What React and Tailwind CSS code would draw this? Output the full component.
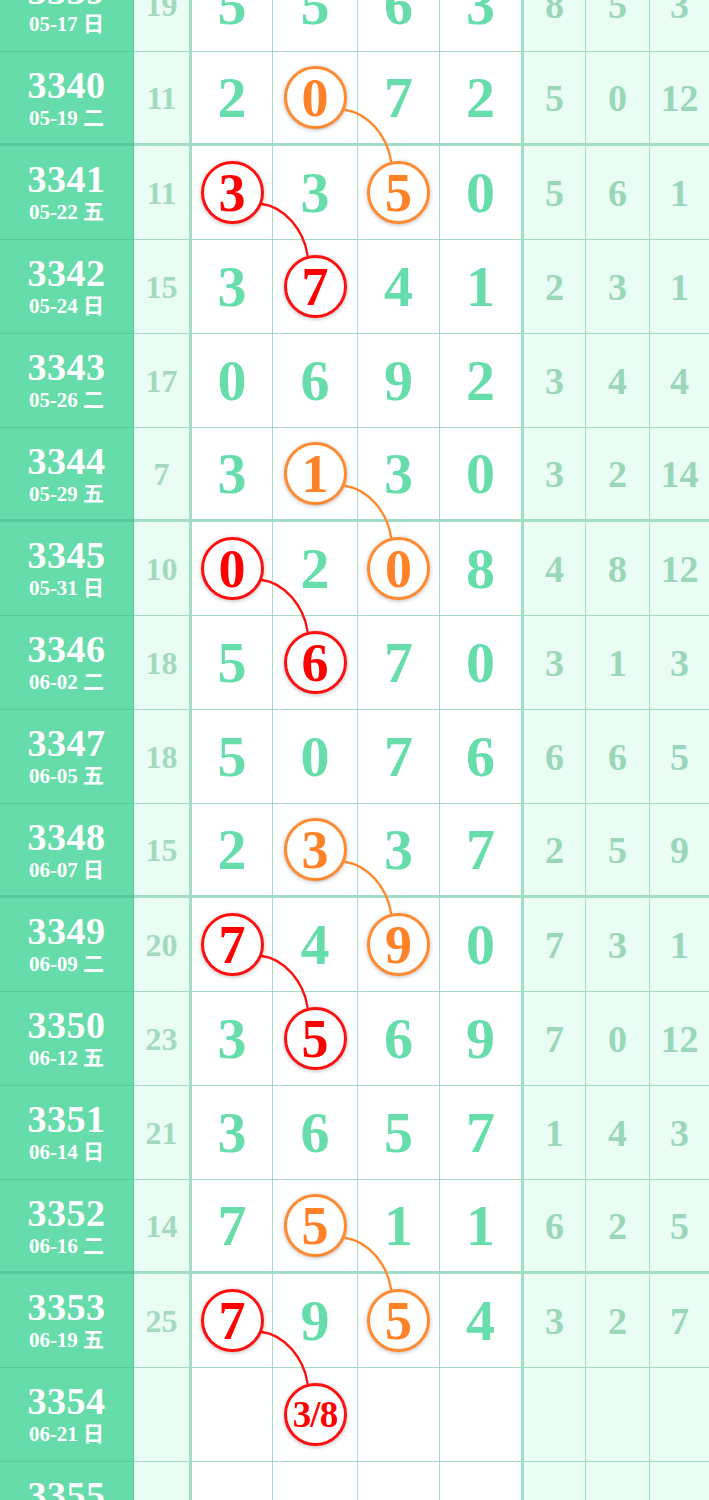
import React from "react";

const rows = [
  { n: "3339", d: "05-17 日", s: "19", g: ["5", "5", "6", "3"], r: ["8", "5", "3"] },
  { n: "3340", d: "05-19 二", s: "11", g: ["2", "0", "7", "2"], r: ["5", "0", "12"], o: 1 },
  { n: "3341", d: "05-22 五", s: "11", g: ["3", "3", "5", "0"], r: ["5", "6", "1"], red: 0, o: 2 },
  { n: "3342", d: "05-24 日", s: "15", g: ["3", "7", "4", "1"], r: ["2", "3", "1"], red: 1 },
  { n: "3343", d: "05-26 二", s: "17", g: ["0", "6", "9", "2"], r: ["3", "4", "4"] },
  { n: "3344", d: "05-29 五", s: "7", g: ["3", "1", "3", "0"], r: ["3", "2", "14"], o: 1 },
  { n: "3345", d: "05-31 日", s: "10", g: ["0", "2", "0", "8"], r: ["4", "8", "12"], red: 0, o: 2 },
  { n: "3346", d: "06-02 二", s: "18", g: ["5", "6", "7", "0"], r: ["3", "1", "3"], red: 1 },
  { n: "3347", d: "06-05 五", s: "18", g: ["5", "0", "7", "6"], r: ["6", "6", "5"] },
  { n: "3348", d: "06-07 日", s: "15", g: ["2", "3", "3", "7"], r: ["2", "5", "9"], o: 1 },
  { n: "3349", d: "06-09 二", s: "20", g: ["7", "4", "9", "0"], r: ["7", "3", "1"], red: 0, o: 2 },
  { n: "3350", d: "06-12 五", s: "23", g: ["3", "5", "6", "9"], r: ["7", "0", "12"], red: 1 },
  { n: "3351", d: "06-14 日", s: "21", g: ["3", "6", "5", "7"], r: ["1", "4", "3"] },
  { n: "3352", d: "06-16 二", s: "14", g: ["7", "5", "1", "1"], r: ["6", "2", "5"], o: 1 },
  { n: "3353", d: "06-19 五", s: "25", g: ["7", "9", "5", "4"], r: ["3", "2", "7"], red: 0, o: 2 },
  { n: "3354", d: "06-21 日", s: "", g: ["", "3/8", "", ""], r: ["", "", ""], red: 1 },
  { n: "3355", d: "06-23 二", s: "", g: ["", "", "", ""], r: ["", "", ""] },
];

const colX = [232, 315.5, 399, 482];
const ROW = 94;

function curve(ax, ay, bx, by) {
  return `M${ax + 30},${ay + 11} C${ax + 52},${ay + 14} ${bx - 12},${by - 58} ${bx - 8},${by - 32}`;
}

const digitW = ["w-[81px]", "w-[85px]", "w-[82px]", "w-[84px]"];
const rightW = ["w-[62px]", "w-[64px]", "flex-1"];

function Circle({ v, color }) {
  const red = color === "red";
  return (
    <div
      className={
        "relative z-10 w-[63px] h-[63px] rounded-full bg-white flex items-center justify-center border-[3px] border-solid shadow-[0_1px_4px_rgba(0,0,0,0.28)] " +
        (red ? "border-[#ff1010] text-[#ff0000]" : "border-[#ff8a30] text-[#ff8228]")
      }
    >
      <span className={(v.length > 1 ? "text-[37px] tracking-[-1px]" : "text-[54px]") + " leading-none font-bold"}>{v}</span>
    </div>
  );
}

export default function App() {
  const lines = [];
  rows.forEach((row, i) => {
    const y = ROW * i + ROW / 2;
    const ny = y + ROW;
    const next = rows[i + 1];
    if (row.o === 1 && next && next.o === 2) {
      lines.push({ d: curve(colX[1], y, colX[2], ny), c: "#ff8a30" });
    }
    if (row.red === 0 && next && next.red === 1) {
      lines.push({ d: curve(colX[0], y, colX[1], ny), c: "#ff1010" });
    }
  });

  const thin = "#a3ddc2";
  return (
    <div className="w-[709px] h-[1500px] overflow-hidden bg-white font-['Liberation_Serif','Noto_Sans_CJK_SC',serif]">
      <div className="relative -mt-[42px]">
        <svg className="absolute left-0 top-0 z-0 pointer-events-none" width="709" height={ROW * rows.length}>
          {lines.map((l, k) => (
            <path key={k} d={l.d} fill="none" stroke={l.c} strokeWidth="2.3" strokeLinecap="round" />
          ))}
        </svg>
        {rows.map((row) => {
          const thick = Number(row.n) % 4 === 0;
          const bb = thick
            ? "border-b-[3px] border-solid border-b-[#a2dec3]"
            : "border-b border-solid border-b-[#a3ddc2]";
          const bbL = thick
            ? "border-b-[3px] border-solid border-b-[#58c799]"
            : "border-b border-solid border-b-[#5bcb9c]";
          return (
            <div key={row.n} className="flex h-[94px]">
              <div className={"w-[134px] shrink-0 bg-[#66dcaa] text-white border-r border-r-[#58c799] flex flex-col items-center pt-[14px] " + bbL}>
                <div className="text-[38px] leading-[38px] font-bold tracking-[0.5px]">{row.n}</div>
                <div className="text-[21px] leading-[24px] font-bold mt-[2px]">{row.d}</div>
              </div>
              <div className={"w-[58px] shrink-0 bg-[#eafdf4] border-r-[3px] border-solid border-r-[#a2dec3] flex items-center justify-center text-[32px] leading-none font-bold text-[#a3d9bf] " + bb}>
                {row.s}
              </div>
              {row.g.map((v, c) => {
                const isRed = row.red === c;
                const isOr = row.o === c;
                return (
                  <div
                    key={c}
                    className={
                      digitW[c] +
                      " shrink-0 flex items-center justify-center " +
                      (c === 3
                        ? "border-r-[3px] border-solid border-r-[#a2dec3] "
                        : "border-r border-solid border-r-[#a3ddc2] ") +
                      bb
                    }
                  >
                    {isRed ? (
                      <Circle v={v} color="red" />
                    ) : isOr ? (
                      <Circle v={v} color="orange" />
                    ) : (
                      <span className="text-[58px] leading-none font-bold text-[#66ddaa]">{v}</span>
                    )}
                  </div>
                );
              })}
              {row.r.map((v, c) => (
                <div
                  key={c}
                  className={
                    rightW[c] +
                    " shrink-0 bg-[#eafdf4] flex items-center justify-center text-[38px] leading-none font-bold text-[#9ad7b9] " +
                    (c < 2 ? "border-r border-solid border-r-[#a3ddc2] " : "") +
                    bb
                  }
                >
                  {v}
                </div>
              ))}
            </div>
          );
        })}
      </div>
    </div>
  );
}
